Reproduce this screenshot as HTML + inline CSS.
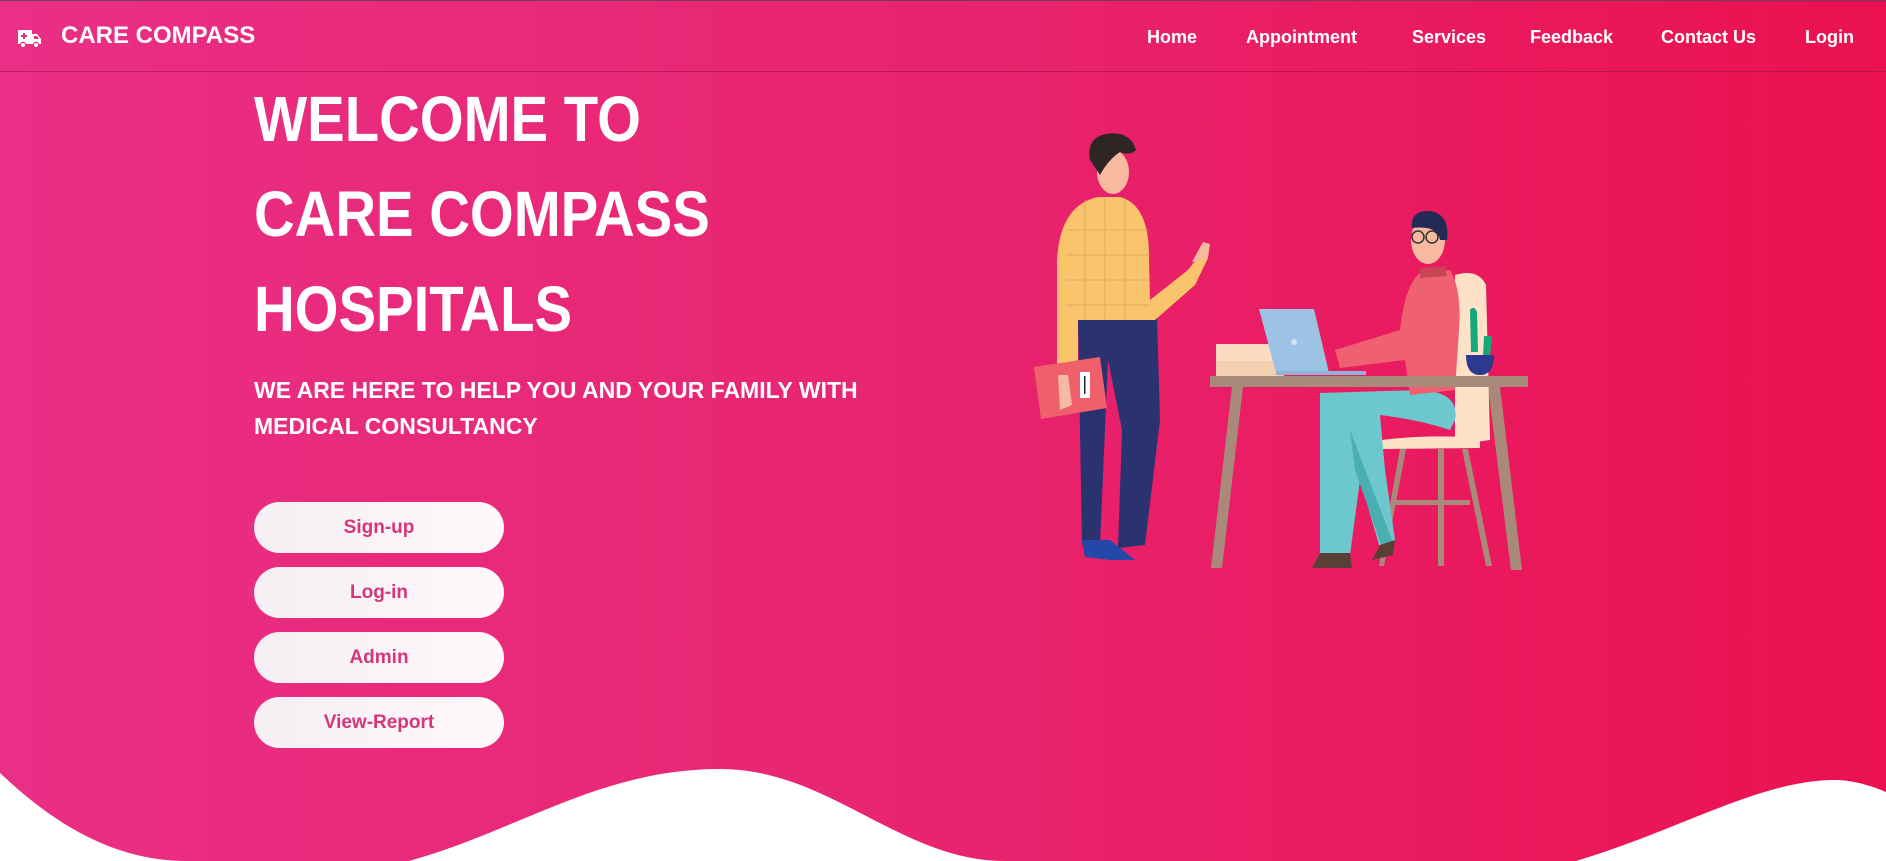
<!DOCTYPE html>
<html><head><meta charset="utf-8">
<style>
*{margin:0;padding:0;box-sizing:border-box}
html,body{width:1886px;height:861px;overflow:hidden}
body{position:relative;background:linear-gradient(90deg,#ea2f86 0%,#e8246f 50%,#eb1150 100%);font-family:"Liberation Sans",sans-serif;color:#fff}
.topline{position:absolute;left:0;top:0;width:1886px;height:1px;background:#7a3a5a}
.nav{position:absolute;left:0;top:0;width:1886px;height:72px;border-bottom:1px solid rgba(120,20,60,.45)}
.logo{position:absolute;left:61px;top:22px;font-size:24px;font-weight:bold}
.nav a{position:absolute;top:27px;font-size:18px;font-weight:bold;color:#fff;text-decoration:none}
h1{position:absolute;left:254px;top:72px;font-size:64px;font-weight:bold;line-height:95px;transform:scaleX(0.88);transform-origin:left top;white-space:nowrap}
.sub{position:absolute;left:254px;top:372px;font-size:23px;font-weight:bold;line-height:36px;white-space:nowrap}
.btn{position:absolute;left:254px;width:250px;height:51px;border-radius:26px;background:linear-gradient(90deg,#f5eff3,#fff8fb);color:#d6357a;font-size:19px;font-weight:bold;text-align:center;line-height:51px}
</style></head><body>
<div class="topline"></div>
<div class="nav">
<svg style="position:absolute;left:17px;top:28px" width="25" height="20" viewBox="0 0 25 20"><path d="M1 2h14v14H1z" fill="#fff"/><path d="M15 6h5l4 5v5h-9z" fill="#fff"/><circle cx="6" cy="17" r="2.6" fill="#fff" stroke="#e92c80" stroke-width="1.2"/><circle cx="19" cy="17" r="2.6" fill="#fff" stroke="#e92c80" stroke-width="1.2"/><path d="M7 5v6M4 8h6" stroke="#e92c80" stroke-width="2"/><path d="M17 8h3l2 3h-5z" fill="#e92c80"/></svg>
<div class="logo">CARE COMPASS</div>
<a style="left:1147px">Home</a>
<a style="left:1246px">Appointment</a>
<a style="left:1412px">Services</a>
<a style="left:1530px">Feedback</a>
<a style="left:1661px">Contact Us</a>
<a style="left:1805px">Login</a>
</div>
<h1>WELCOME TO<br>CARE COMPASS<br>HOSPITALS</h1>
<div class="sub">WE ARE HERE TO HELP YOU AND YOUR FAMILY WITH<br>MEDICAL CONSULTANCY</div>
<div class="btn" style="top:502px">Sign-up</div>
<div class="btn" style="top:567px">Log-in</div>
<div class="btn" style="top:632px">Admin</div>
<div class="btn" style="top:697px">View-Report</div>

<svg style="position:absolute;left:0;top:0" width="1886" height="861" viewBox="0 0 1886 861">
<path d="M1232 387 L1243 387 L1222 568 L1211 568Z" fill="#a98a7a"/>
<path d="M1488 387 L1500 387 L1522 570 L1511 570Z" fill="#a98a7a"/>
<path d="M1455 275 Q1478 268 1486 285 L1490 440 L1455 445Z" fill="#fde2c8"/>
<path d="M1382 440 Q1430 434 1480 438 L1480 448 L1382 449Z" fill="#fde2c8"/>
<path d="M1400 449 L1406 449 L1384 566 L1379 566Z M1438 449 L1444 449 L1444 566 L1438 566Z M1462 449 L1468 449 L1492 566 L1486 566Z M1395 500 L1470 500 L1470 505 L1395 505Z" fill="#a98a7a"/>
<path d="M1320 393 L1420 390 Q1460 392 1455 420 L1450 430 Q1420 420 1380 415 L1385 470 L1395 540 L1380 548 L1360 480 L1350 555 L1320 555 Z" fill="#6cc8cc"/>
<path d="M1350 430 L1392 540 L1383 550 L1355 470Z" fill="#4baeb2"/>
<path d="M1320 553 L1350 553 L1352 568 L1312 568Z" fill="#5a3f37"/>
<path d="M1380 545 L1395 540 L1393 555 L1372 560Z" fill="#5a3f37"/>
<path d="M1420 273 L1450 270 Q1462 290 1459 330 L1455 390 L1410 395 L1405 360 L1340 368 L1335 350 L1400 330 Q1405 285 1420 273Z" fill="#ef6070"/>
<path d="M1420 268 L1445 266 L1447 276 L1420 278Z" fill="#c94455"/>
<ellipse cx="1428" cy="240" rx="17" ry="24" fill="#f7b9a0"/>
<path d="M1412 228 Q1410 210 1430 211 Q1450 214 1447 240 L1440 240 Q1438 225 1412 228Z" fill="#222a55"/>
<circle cx="1418" cy="237" r="6" fill="none" stroke="#333" stroke-width="1.5"/><circle cx="1432" cy="237" r="6" fill="none" stroke="#333" stroke-width="1.5"/>
<rect x="1210" y="376" width="318" height="11" fill="#a98a7a"/>
<rect x="1216" y="344" width="68" height="17" fill="#fcdcc0"/><rect x="1216" y="361" width="68" height="15" fill="#f5d0b0"/>
<path d="M1259 309 L1314 309 L1329 373 L1276 373Z" fill="#9cc3e4"/>
<rect x="1276" y="371" width="90" height="4" fill="#8fb4d6"/>
<circle cx="1294" cy="342" r="3" fill="#dde"/>
<path d="M1470 310 Q1474 305 1477 312 L1478 352 L1471 352Z" fill="#14a87a"/><path d="M1484 336 L1492 336 L1490 356 L1483 356Z" fill="#14a87a"/>
<path d="M1466 355 L1494 355 Q1494 375 1480 375 Q1466 375 1466 355Z" fill="#2b3a8c"/>
<path d="M1078 317 L1157 317 L1160 420 L1145 545 L1118 548 L1122 430 L1108 360 L1100 545 L1082 545Z" fill="#2b3270"/>
<path d="M1082 540 L1110 540 L1135 560 L1110 560 L1085 557Z" fill="#2448a8"/>
<rect x="1078" y="314" width="76" height="6" fill="#e98b3a"/>
<path d="M1098 197 L1120 197 Q1150 205 1149 260 L1150 300 L1188 270 L1202 252 L1208 258 L1195 285 L1155 320 L1078 320 L1078 360 L1065 375 L1057 375 L1057 260 Q1060 205 1098 197Z" fill="#f9c46b"/>
<path d="M1066 230 L1150 230 M1066 255 L1150 255 M1066 280 L1150 280 M1066 305 L1150 305 M1085 200 L1085 320 M1105 198 L1105 320 M1125 198 L1125 320" stroke="#c9a060" stroke-width="1" opacity=".6"/>
<path d="M1192 262 L1203 242 L1210 244 L1208 258Z" fill="#f7b9a0"/>
<ellipse cx="1113" cy="172" rx="16" ry="22" fill="#f7b9a0"/>
<path d="M1090 160 Q1086 138 1106 134 Q1130 130 1136 150 Q1130 156 1120 152 Q1108 160 1100 175 Z" fill="#2e2623"/>
<path d="M1034 367 L1100 357 L1107 408 L1041 419Z" fill="#f0606b"/>
<rect x="1080" y="372" width="10" height="26" fill="#fff"/><rect x="1084" y="376" width="1.5" height="18" fill="#223"/>
<path d="M1058 375 L1068 375 L1072 405 L1060 410Z" fill="#f7b9a0"/>
<path fill="#fff" d="M0 773 C60 830 120 861 187 861 L0 861Z M409 861 C520 830 600 769 720 769 C830 769 900 861 1005 861Z M1576 861 C1680 830 1760 780 1835 780 C1860 780 1886 792 1886 792 L1886 861Z"/>
</svg>
</body></html>
